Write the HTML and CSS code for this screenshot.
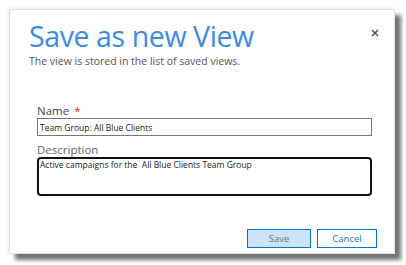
FILE: index.html
```html
<!DOCTYPE html>
<html lang="en">
<head>
    <meta charset="UTF-8">
    <title>Save as new View</title>
    <link rel="stylesheet" href="styles.css">
</head>
<body>
    <div class="dialog">
        <div class="dialog-header">
            <div>
                <h1 class="title">Save as new View</h1>
                <p class="subtitle">The view is stored in the list of saved views.</p>
            </div>
            <button class="close" aria-label="Close">
                <svg width="8" height="8" viewBox="0 0 8 8">
                    <path d="M1 1L7 7M7 1L1 7" stroke="#555" stroke-width="1.6"/>
                </svg>
            </button>
        </div>

        <form class="dialog-body">
            <label class="field-label" for="viewName">Name <span class="required">*</span></label>
            <input class="name-input" id="viewName" type="text" value="Team Group: All Blue Clients">
            <label class="field-label desc-label" for="viewDesc">Description</label>
            <textarea class="desc-input" id="viewDesc">Active campaigns for the  All Blue Clients Team Group</textarea>
        </form>

        <div class="dialog-footer">
            <button class="btn btn-save">Save</button>
            <button class="btn btn-cancel">Cancel</button>
        </div>
    </div>
</body>
</html>
```

FILE: styles.css
```css
* {
    margin: 0;
    padding: 0;
    box-sizing: border-box;
}

body {
    font-family: 'Open Sans', 'Liberation Sans', sans-serif;
    background: white;
    padding: 9px;
}

.dialog {
    width: 386px;
    height: 245px;
    background: #fff;
    border: 1px solid #e2e2e2;
    box-shadow: 6px 6px 4px rgba(0,0,0,0.55), -1px -1px 3px rgba(0,0,0,0.08);
    display: flex;
    flex-direction: column;
}

.dialog-header {
    display: flex;
    justify-content: space-between;
    align-items: flex-start;
    padding: 8px 15px 0 19px;
}

.title {
    font-size: 28.5px;
    font-weight: 400;
    line-height: 36px;
    color: #3b8be6;
    letter-spacing: -0.4px;
}

.subtitle {
    font-size: 10.5px;
    line-height: 14px;
    color: #555;
}

.close {
    border: none;
    background: none;
    margin-top: 11px;
    cursor: pointer;
    display: flex;
}

.dialog-body {
    display: flex;
    flex-direction: column;
    padding: 36px 22px 0 27px;
}

.field-label {
    font-size: 11.5px;
    line-height: 14px;
    color: #444;
}

.required {
    color: #d22;
    margin-left: 2px;
}

.desc-label {
    color: #666;
    margin-top: 7px;
}

.name-input {
    height: 18px;
    border: 1px solid #777;
    font-family: inherit;
    font-size: 8.5px;
    padding: 0 2px;
    color: #222;
}

.desc-input {
    height: 39px;
    border: 2px solid #111;
    border-radius: 4px;
    font-family: inherit;
    font-size: 8.5px;
    line-height: 11px;
    padding: 0 1px;
    color: #222;
    resize: none;
    outline: none;
}

.dialog-footer {
    margin-top: auto;
    display: flex;
    justify-content: flex-end;
    gap: 6px;
    padding: 0 17px 5px 0;
}

.btn {
    width: 64px;
    height: 19px;
    font-family: inherit;
    font-size: 9.5px;
    border: 1px solid #0078d7;
    cursor: pointer;
}

.btn-save {
    background: #cce4f7;
    color: #777;
}

.btn-cancel {
    width: 60px;
    background: #fff;
    color: #0078d7;
}
```
